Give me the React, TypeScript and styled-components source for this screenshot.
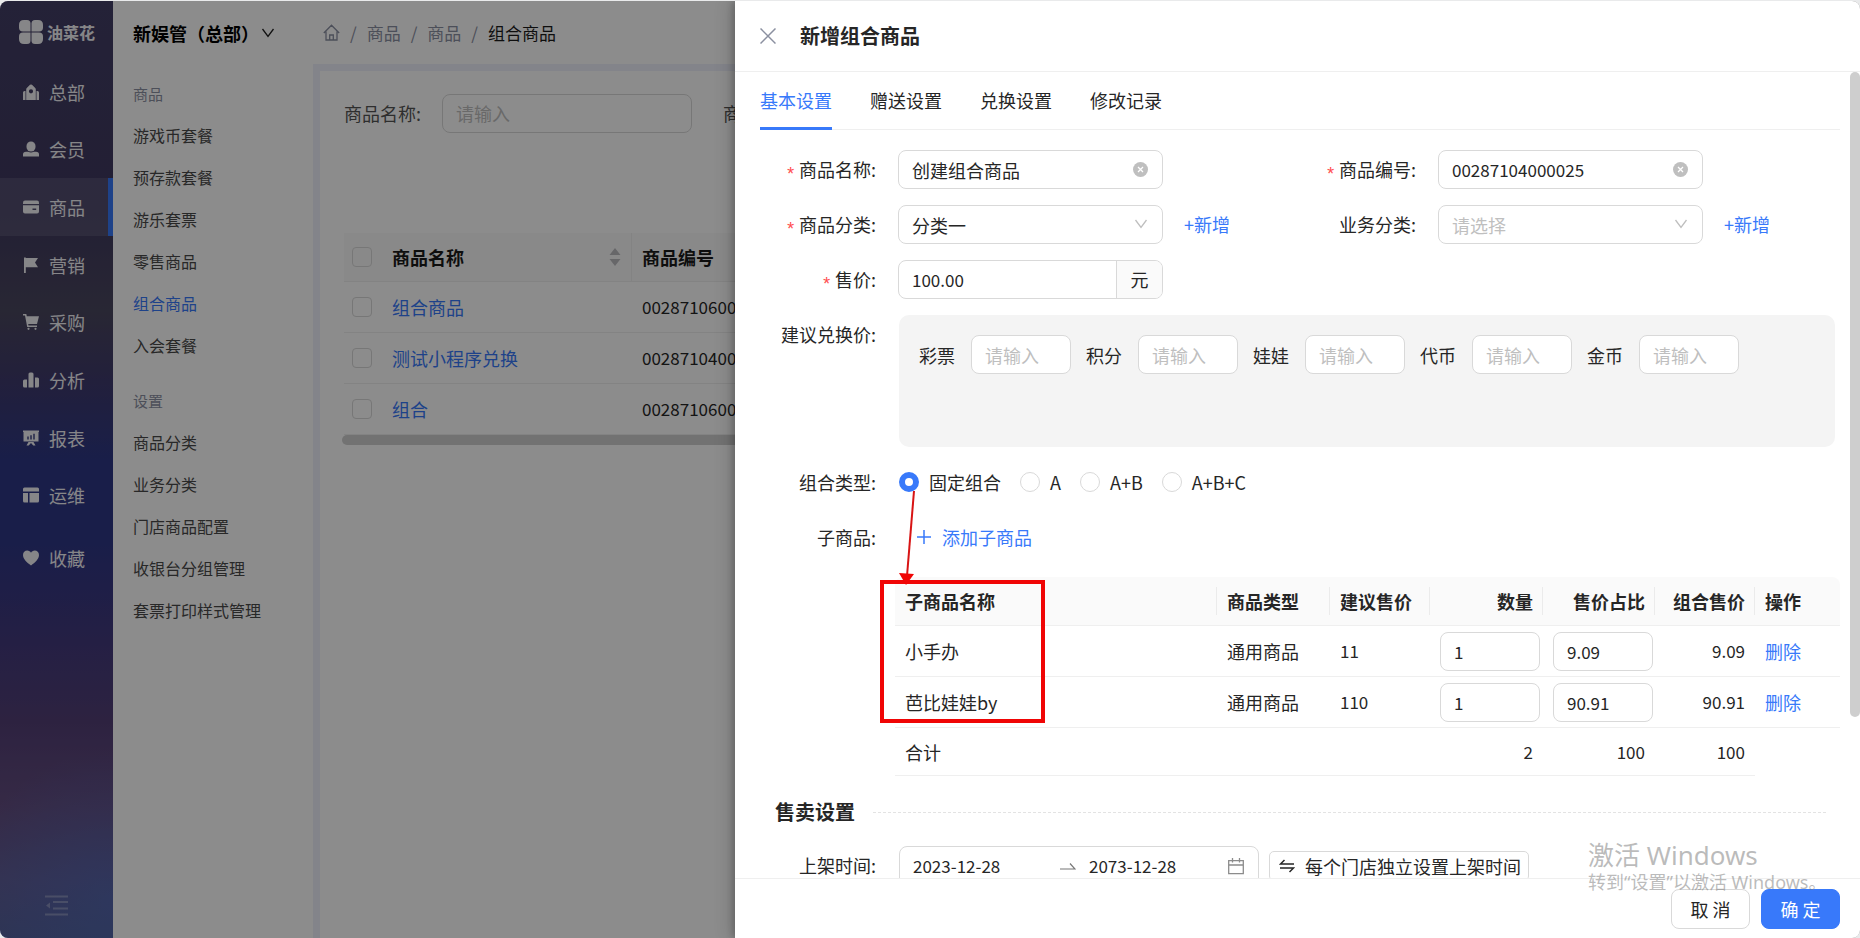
import React from 'react';
import styled, { createGlobalStyle, css } from 'styled-components';

const PRIMARY = '#3879fa';
const TEXT = '#262626';
const LINE = '#d9d9d9';
const SOFT_LINE = '#efefef';

const GlobalStyle = createGlobalStyle`
  *, *::before, *::after { box-sizing: border-box; }
  body {
    margin: 0;
    background: #e9eaeb;
    color: ${TEXT};
    font-family: "Noto Sans CJK SC", "Noto Sans", sans-serif;
    font-size: 18px;
    line-height: 24px;
  }
  button, input, select { font: inherit; color: inherit; margin: 0; }
  button { background: none; border: 0; padding: 0; cursor: pointer; }
  a { color: inherit; text-decoration: none; }
  ul { list-style: none; margin: 0; padding: 0; }
  h1, h2, p { margin: 0; }
  svg { display: block; flex: none; }
`;

/* ---------- shell ---------- */

const Frame = styled.div`
  height: 100vh;
  padding-top: 1px;
`;

const Shell = styled.div`
  position: relative;
  display: flex;
  height: 100%;
  overflow: hidden;
  border-radius: 8px;
  background: #fff;
`;

const Rail = styled.nav`
  flex: none;
  width: 113px;
  display: flex;
  flex-direction: column;
  color: #f4f4f8;
  background:
    radial-gradient(circle at 100% 96%, rgba(76, 108, 190, 0.5), rgba(76, 108, 190, 0) 150px),
    linear-gradient(
      180deg,
      #433e66 0%,
      #3f3960 22%,
      #4a475f 33%,
      #403b6c 40%,
      #2e3885 49%,
      #2f3785 58%,
      #40397e 67%,
      #533f76 77%,
      #634d80 86%,
      #605c94 94%,
      #556098 100%
    );
`;

const Logo = styled.a`
  display: flex;
  align-items: center;
  gap: 4px;
  height: 62px;
  padding-left: 19px;
  font-size: 16px;
  font-weight: 700;
`;

const RailList = styled.ul`
  display: flex;
  flex-direction: column;
  height: 461px;
`;

const RailItem = styled.li<{ $active?: boolean }>`
  flex: 1;
  display: flex;
  ${(p) =>
    p.$active &&
    css`
      background: rgba(255, 255, 255, 0.1);
      border-right: 5px solid ${PRIMARY};
    `}
`;

const RailLink = styled.a`
  display: flex;
  align-items: center;
  gap: 10px;
  padding-left: 23px;
`;

const Favorite = styled(RailLink)`
  height: 68px;
`;

const Collapse = styled.button`
  margin: auto auto 22px 45px;
  opacity: 0.3;
`;

const Main = styled.div`
  flex: 1;
  min-width: 0;
  display: flex;
  flex-direction: column;
`;

const TopBar = styled.header`
  flex: none;
  display: flex;
  align-items: center;
  height: 63px;
  padding: 0 20px;
`;

const Org = styled.button`
  display: flex;
  align-items: center;
  gap: 2px;
  width: 190px;
  font-weight: 700;
  color: #000;
  white-space: nowrap;
`;

const Crumbs = styled.nav`
  display: flex;
  align-items: center;
  gap: 10px;
  font-size: 17px;
  color: #8b90a3;
`;

const CrumbHere = styled.span`
  color: #1a1a1a;
`;

const Columns = styled.div`
  flex: 1;
  display: flex;
  min-height: 0;
`;

const SubMenu = styled.nav`
  flex: none;
  width: 200px;
  padding: 20px 0 0 20px;
  font-size: 16px;
  color: #4a4a4a;
`;

const SubTitle = styled.h2`
  font-size: 15px;
  font-weight: 400;
  line-height: 20px;
  color: #8b90a3;
  padding-bottom: 10px;
  ul + & {
    padding-top: 25px;
  }
`;

const SubItem = styled.li<{ $active?: boolean }>`
  line-height: 42px;
  color: ${(p) => (p.$active ? PRIMARY : 'inherit')};
`;

const Content = styled.main`
  flex: 1;
  min-width: 0;
  overflow: hidden;
  border: solid #eff0fb;
  border-width: 7px 0 0 7px;
  padding: 22px 0 0 24px;
`;

const SearchRow = styled.div`
  display: flex;
  align-items: center;
  gap: 21px;
  height: 40px;
  margin-bottom: 100px;
  color: #555;
`;

const SearchLabel = styled.label`
  white-space: nowrap;
  input + & {
    margin-left: 10px;
  }
`;

/* ---------- shared controls ---------- */

const Input = styled.input<{ $w?: number; $num?: boolean }>`
  width: ${(p) => (p.$w ? `${p.$w}px` : '100%')};
  height: 39px;
  padding: 0 13px;
  border: 1px solid ${LINE};
  border-radius: 8px;
  background: #fff;
  font-size: ${(p) => (p.$num ? 17 : 18)}px;
  outline: 0;
  &::placeholder {
    color: #bfbfbf;
    opacity: 1;
  }
`;

const Check = styled.input.attrs({ type: 'checkbox' })`
  appearance: none;
  display: block;
  width: 20px;
  height: 20px;
  border: 1px solid ${LINE};
  border-radius: 4px;
`;

const Link = styled.a`
  color: ${PRIMARY};
`;

/* ---------- product list ---------- */

const ListTable = styled.table`
  width: 100%;
  min-width: 1500px;
  table-layout: fixed;
  border-collapse: separate;
  border-spacing: 0;
  th,
  td {
    height: 51px;
    padding: 0 10px;
    text-align: left;
    border-bottom: 1px solid ${SOFT_LINE};
  }
  th {
    height: 49px;
    background: #fafafa;
    color: #1a1a1a;
  }
  th:first-child,
  td:first-child {
    width: 38px;
    padding: 0 0 0 8px;
  }
  th:nth-child(2) {
    width: 250px;
    border-right: 1px solid ${SOFT_LINE};
  }
  td:nth-child(3) {
    font-size: 17px;
  }
`;

const SortHead = styled.span`
  display: flex;
  align-items: center;
  justify-content: space-between;
`;

const HScroll = styled.div`
  height: 10px;
  margin-left: -2px;
  border-radius: 5px;
  background: #d0d0d0;
`;

/* ---------- drawer ---------- */

const Mask = styled.div`
  position: absolute;
  inset: 0;
  background: rgba(0, 0, 0, 0.45);
`;

const Drawer = styled.aside`
  position: absolute;
  top: 0;
  right: 0;
  bottom: 0;
  width: 1125px;
  max-width: 100%;
  display: flex;
  flex-direction: column;
  background: #fff;
  box-shadow: -6px 0 16px rgba(0, 0, 0, 0.12), -3px 0 6px rgba(0, 0, 0, 0.18);
`;

const DrawerHead = styled.header`
  flex: none;
  display: flex;
  align-items: center;
  gap: 24px;
  height: 71px;
  padding-left: 25px;
  border-bottom: 1px solid ${SOFT_LINE};
`;

const DrawerTitle = styled.h1`
  font-size: 20px;
  line-height: 28px;
  font-weight: 700;
`;

const ScrollArea = styled.div`
  position: relative;
  flex: 1;
  min-height: 0;
`;

const DrawerBody = styled.div`
  height: 100%;
  overflow-y: auto;
  scrollbar-width: none;
  padding: 0 20px 20px 25px;
`;

const Thumb = styled.div`
  position: absolute;
  top: 0;
  right: 0;
  width: 10px;
  height: 80%;
  border-radius: 5px;
  background: #cecece;
`;

const Tabs = styled.div`
  display: flex;
  gap: 38px;
  height: 58px;
  border-bottom: 1px solid ${SOFT_LINE};
`;

const Tab = styled.button<{ $active?: boolean }>`
  height: 58px;
  border-bottom: 3px solid ${(p) => (p.$active ? PRIMARY : 'transparent')};
  color: ${(p) => (p.$active ? PRIMARY : 'inherit')};
`;

const Form = styled.form`
  display: grid;
  grid-template-columns: 1fr 1fr;
  row-gap: 16px;
  padding-top: 20px;
`;

const Field = styled.div<{ $wide?: boolean }>`
  display: flex;
  align-items: flex-start;
  grid-column: ${(p) => (p.$wide ? '1 / -1' : 'auto')};
`;

const labelStyle = css`
  flex: none;
  width: 138px;
  padding-right: 22px;
  line-height: 39px;
  text-align: right;
  white-space: nowrap;
`;

const FieldLabel = styled.label<{ $required?: boolean }>`
  ${labelStyle}
  &::before {
    content: ${(p) => (p.$required ? '"*"' : 'none')};
    margin-right: 3px;
    color: #ff4d4f;
    font-family: "Liberation Mono", monospace;
    line-height: 20px;
    vertical-align: -3px;
  }
  &::after {
    content: ':';
  }
`;

const GroupLabel = styled.span`
  ${labelStyle}
  &::after {
    content: ':';
  }
`;

const Control = styled.div`
  position: relative;
  width: 265px;
`;

const Suffix = styled.span`
  position: absolute;
  top: 12px;
  right: 15px;
  pointer-events: none;
`;

const Select = styled.select<{ $empty?: boolean }>`
  appearance: none;
  width: 100%;
  height: 39px;
  padding: 0 36px 0 13px;
  border: 1px solid ${LINE};
  border-radius: 8px;
  background: #fff;
  color: ${(p) => (p.$empty ? '#bfbfbf' : 'inherit')};
`;

const AddLink = styled(Link)`
  margin-left: 21px;
  line-height: 39px;
`;

const PriceGroup = styled.div`
  display: flex;
  width: 265px;
  height: 39px;
  border: 1px solid ${LINE};
  border-radius: 8px;
  overflow: hidden;
`;

const BareInput = styled.input`
  flex: 1;
  min-width: 0;
  border: 0;
  padding: 0 13px;
  background: none;
  font-size: 17px;
  outline: 0;
`;

const Addon = styled.span`
  width: 46px;
  border-left: 1px solid ${LINE};
  background: #fafafa;
  line-height: 37px;
  text-align: center;
`;

const Panel = styled.div`
  flex: 1;
  display: flex;
  align-items: flex-start;
  gap: 15px;
  height: 132px;
  margin: 0 5px 0 1px;
  padding: 20px;
  border-radius: 10px;
  background: #f4f4f4;
`;

const PanelField = styled.label`
  display: flex;
  align-items: center;
  gap: 16px;
  white-space: nowrap;
`;

const Radios = styled.div`
  display: flex;
  align-items: center;
  gap: 19px;
  height: 38px;
  padding-left: 1px;
`;

const RadioLabel = styled.label`
  display: flex;
  align-items: center;
  gap: 10px;
`;

const Radio = styled.input.attrs({ type: 'radio' })`
  appearance: none;
  width: 20px;
  height: 20px;
  border: 1px solid ${LINE};
  border-radius: 50%;
  background: #fff;
  &:checked {
    border: 6px solid ${PRIMARY};
  }
`;

const AddChild = styled.button`
  display: flex;
  align-items: center;
  gap: 11px;
  height: 38px;
  margin-left: 19px;
  color: ${PRIMARY};
`;

const ChildBlock = styled.div`
  position: relative;
  margin: 20px 0 0 135px;
`;

const ChildTable = styled.table`
  width: 100%;
  table-layout: fixed;
  border-collapse: separate;
  border-spacing: 0;
  th,
  td {
    height: 51px;
    padding: 0 10px;
    text-align: left;
    border-bottom: 1px solid ${SOFT_LINE};
    white-space: nowrap;
  }
  th {
    height: 49px;
    background: #fafafa;
  }
  th:first-child {
    border-top-left-radius: 8px;
  }
  th:last-child {
    border-top-right-radius: 8px;
  }
  tfoot td {
    height: 48px;
  }
  tfoot td:last-child {
    border-bottom: 0;
  }
`;

const HeadCell = styled.th<{ $w?: number; $end?: boolean }>`
  width: ${(p) => (p.$w ? `${p.$w}px` : 'auto')};
  && {
    text-align: ${(p) => (p.$end ? 'right' : 'left')};
  }
  &:not(:last-child) {
    background: linear-gradient(#ebebeb, #ebebeb) right center / 1px 28px no-repeat, #fafafa;
  }
`;

const NumCell = styled.td<{ $end?: boolean }>`
  font-size: 17px;
  && {
    text-align: ${(p) => (p.$end ? 'right' : 'left')};
  }
`;

const InputCell = styled.td`
  && {
    padding: 0 0 0 10px;
  }
`;

const Highlight = styled.div`
  position: absolute;
  top: 3px;
  left: -15px;
  width: 165px;
  height: 143px;
  border: 4px solid #f00505;
  pointer-events: none;
`;

const Pointer = styled.svg`
  position: absolute;
  top: -87px;
  left: 3px;
  pointer-events: none;
`;

const SectionHead = styled.div`
  display: flex;
  align-items: center;
  gap: 18px;
  margin: 22px 14px 20px 15px;
  &::after {
    content: '';
    flex: 1;
    border-top: 1px dashed #e3e3e3;
  }
`;

const SectionTitle = styled.h2`
  font-size: 20px;
  line-height: 28px;
`;

const DateRange = styled.div`
  display: flex;
  align-items: center;
  width: 360px;
  height: 40px;
  margin: 0 10px 0 1px;
  padding-right: 14px;
  border: 1px solid ${LINE};
  border-radius: 8px;
`;

const StartInput = styled(BareInput)`
  flex: none;
  width: 160px;
`;

const PlainButton = styled.button`
  display: flex;
  align-items: center;
  gap: 10px;
  height: 30px;
  margin-top: 5px;
  padding: 0 7px 0 9px;
  border: 1px solid ${LINE};
  border-radius: 5px;
  white-space: nowrap;
`;

const DrawerFoot = styled.footer`
  flex: none;
  display: flex;
  justify-content: flex-end;
  gap: 11px;
  height: 60px;
  padding: 10px 20px 0;
  border-top: 1px solid ${SOFT_LINE};
`;

const FootButton = styled.button<{ $primary?: boolean }>`
  width: 79px;
  height: 40px;
  border-radius: 8px;
  border: 1px solid ${(p) => (p.$primary ? PRIMARY : LINE)};
  background: ${(p) => (p.$primary ? PRIMARY : '#fff')};
  color: ${(p) => (p.$primary ? '#fff' : 'inherit')};
`;

const Activation = styled.div`
  position: absolute;
  right: 36px;
  bottom: 44px;
  width: 236px;
  color: rgba(120, 120, 120, 0.5);
  font-family: "Noto Sans", "Noto Sans CJK SC", sans-serif;
  white-space: nowrap;
  pointer-events: none;
`;

const ActivationTitle = styled.p`
  font-size: 26px;
  line-height: 30px;
`;

/* ---------- icons ---------- */

const Glyph = ({ children }: { children: React.ReactNode }) => (
  <svg width="16" height="16" viewBox="0 0 16 16" fill="currentColor" aria-hidden="true">
    {children}
  </svg>
);

const HouseGlyph = () => (
  <Glyph>
    <path d="M0 8.500Q0 7 1.500 7h1v9H0zM16 8.500Q16 7 14.500 7h-1v9H16z" />
    <path fillRule="evenodd" d="M3.200 5.500Q3.200 4.500 4 3.800L7 .8q1-.8 2 0l3 3q.8.7.8 1.700V16H3.200zM8 5.200a2.100 2.100 0 1 0 0 4.200 2.100 2.100 0 0 0 0-4.200z" />
  </Glyph>
);
const UserGlyph = () => (
  <Glyph>
    <rect x="3.500" y="0.500" width="9" height="10" rx="4.500" />
    <path d="M0 15.500v-2Q0 10.800 3 10.800h2.200q2.800 1.400 5.600 0H13q3 0 3 2.700v2z" />
  </Glyph>
);
const CardGlyph = () => (
  <Glyph>
    <path d="M2 1.500h12q2 0 2 2V5H0V3.500q0-2 2-2z" />
    <path fillRule="evenodd" d="M0 6.300h16v6.200q0 2-2 2H2q-2 0-2-2zM9.500 9.500V11h3.700V9.500z" />
  </Glyph>
);
const FlagGlyph = () => (
  <Glyph>
    <path d="M1 .5h1.800V1H15l-3 4.500 3 4.700H2.800V16H1z" />
  </Glyph>
);
const CartGlyph = () => (
  <Glyph>
    <path d="M0 0h3.300l.5 2.200H16l-2 7.800H5.200l.3 1.500H14V13H4.200L2 1.500H0z" />
    <circle cx="5.500" cy="14.800" r="1.100" />
    <circle cx="12.500" cy="14.800" r="1.100" />
  </Glyph>
);
const BarsGlyph = () => (
  <Glyph>
    <path d="M0 9q0-1.500 1.500-1.500H4V15.500H1.500Q0 15.500 0 14zM5.500 2Q5.500.5 7 .5h2q1.500 0 1.500 1.500v13.500h-5zM12 5.500h2.500Q16 5.500 16 7v7q0 1.500-1.500 1.500H12z" />
  </Glyph>
);
const BoardGlyph = () => (
  <Glyph>
    <path fillRule="evenodd" d="M0 .5h16V2h-.5v9.500h-15V2H0zM4.300 6.500v3h1.400v-3zM7.300 5.200v4.300h1.400V5.200zM10.300 3.700v5.800h1.400V3.700z" />
    <path d="M5.500 12h5l2 3.500h-2.200L8 13l-2.300 2.500H3.500z" />
  </Glyph>
);
const LayoutGlyph = () => (
  <Glyph>
    <path d="M1.500.5h13Q16 .5 16 2v2.500H0V2Q0 .5 1.500.5zM0 6h5v9.500H1.500Q0 15.500 0 14zM6.500 6H16v8q0 1.500-1.500 1.500h-8z" />
  </Glyph>
);
const HeartGlyph = () => (
  <Glyph>
    <path d="M8 15.500C4 12.500 0 9 0 5 0 2 2 .5 4.200.5 6 .5 7.300 1.500 8 2.700 8.700 1.500 10 .5 11.800.5 14 .5 16 2 16 5c0 4-4 7.500-8 10.500z" />
  </Glyph>
);

const LogoMark = () => (
  <svg width="24" height="24" viewBox="0 0 24 24" fill="currentColor" aria-hidden="true">
    <path d="M5 0h3q3.500 0 3.500 3.500v8H4Q0 11.500 0 7.500V5Q0 0 5 0z" />
    <path d="M16 0h3q5 0 5 5v2.500q0 4-4 4h-7.500v-8Q12.500 0 16 0z" />
    <path d="M4 12.500h7.500v8Q11.500 24 8 24H5q-5 0-5-5v-2.500q0-4 4-4z" />
    <path d="M12.500 12.500H20q4 0 4 4V19q0 5-5 5h-3q-3.500 0-3.500-3.500z" />
  </svg>
);

const Chevron = ({ color }: { color: string }) => (
  <svg width="14" height="14" viewBox="0 0 14 14" fill="none" stroke={color} strokeWidth="1.300" aria-hidden="true">
    <path d="M1.500 3 7 10.500 12.500 3" />
  </svg>
);

const ClearIcon = () => (
  <svg width="15" height="15" viewBox="0 0 15 15" aria-hidden="true">
    <circle cx="7.500" cy="7.500" r="7.500" fill="#bfbfbf" />
    <path d="M5 5l5 5M10 5l-5 5" stroke="#fff" strokeWidth="1.300" />
  </svg>
);

const HomeIcon = () => (
  <svg width="17" height="17" viewBox="0 0 17 17" fill="none" stroke="currentColor" strokeWidth="1.300" aria-hidden="true">
    <path d="M.8 9 8.500 1.200 16.200 9M3 7.500V16h11V7.500M6.700 16v-5h3.600v5" />
  </svg>
);

/* ---------- data ---------- */

const railItems = [
  { name: '总部', icon: <HouseGlyph /> },
  { name: '会员', icon: <UserGlyph /> },
  { name: '商品', icon: <CardGlyph /> },
  { name: '营销', icon: <FlagGlyph /> },
  { name: '采购', icon: <CartGlyph /> },
  { name: '分析', icon: <BarsGlyph /> },
  { name: '报表', icon: <BoardGlyph /> },
  { name: '运维', icon: <LayoutGlyph /> },
];
const goodsMenu = ['游戏币套餐', '预存款套餐', '游乐套票', '零售商品', '组合商品', '入会套餐'];
const settingMenu = ['商品分类', '业务分类', '门店商品配置', '收银台分组管理', '套票打印样式管理'];
const products = [
  { name: '组合商品', code: '00287106000' },
  { name: '测试小程序兑换', code: '00287104000' },
  { name: '组合', code: '00287106000' },
];
const currencies = ['彩票', '积分', '娃娃', '代币', '金币'];
const comboTypes = ['固定组合', 'A', 'A+B', 'A+B+C'];
const children = [
  { name: '小手办', type: '通用商品', price: '11', qty: '1', ratio: '9.09', total: '9.09' },
  { name: '芭比娃娃by', type: '通用商品', price: '110', qty: '1', ratio: '90.91', total: '90.91' },
];

/* ---------- page ---------- */

export default function App() {
  return (
    <Frame>
      <GlobalStyle />
      <Shell>
        <Rail aria-label="主导航">
          <Logo href="#">
            <LogoMark />
            油菜花
          </Logo>
          <RailList>
            {railItems.map((item) => (
              <RailItem key={item.name} $active={item.name === '商品'}>
                <RailLink href="#">
                  {item.icon}
                  {item.name}
                </RailLink>
              </RailItem>
            ))}
          </RailList>
          <Favorite href="#">
            <HeartGlyph />
            收藏
          </Favorite>
          <Collapse type="button" aria-label="收起菜单">
            <svg width="23" height="21" viewBox="0 0 23 21" fill="none" stroke="currentColor" strokeWidth="2">
              <path d="M0 1.500h23M8 7h15M8 13.500h15M0 19.500h23" />
              <path d="M5 7.500v6L1 10.500z" fill="currentColor" stroke="none" />
            </svg>
          </Collapse>
        </Rail>

        <Main>
          <TopBar>
            <Org type="button">
              新娱管（总部）
              <Chevron color="#222" />
            </Org>
            <Crumbs aria-label="面包屑">
              <a href="#" aria-label="首页">
                <HomeIcon />
              </a>
              <span>/</span>
              <a href="#">商品</a>
              <span>/</span>
              <a href="#">商品</a>
              <span>/</span>
              <CrumbHere>组合商品</CrumbHere>
            </Crumbs>
          </TopBar>
          <Columns>
            <SubMenu aria-label="商品菜单">
              <SubTitle>商品</SubTitle>
              <ul>
                {goodsMenu.map((name) => (
                  <SubItem key={name} $active={name === '组合商品'}>
                    <a href="#">{name}</a>
                  </SubItem>
                ))}
              </ul>
              <SubTitle>设置</SubTitle>
              <ul>
                {settingMenu.map((name) => (
                  <SubItem key={name}>
                    <a href="#">{name}</a>
                  </SubItem>
                ))}
              </ul>
            </SubMenu>
            <Content>
              <SearchRow>
                <SearchLabel htmlFor="search-name">商品名称:</SearchLabel>
                <Input id="search-name" $w={250} placeholder="请输入" />
                <SearchLabel htmlFor="search-code">商品编号:</SearchLabel>
                <Input id="search-code" $w={250} placeholder="请输入" />
              </SearchRow>
              <ListTable>
                <thead>
                  <tr>
                    <th>
                      <Check aria-label="全选" />
                    </th>
                    <th>
                      <SortHead>
                        商品名称
                        <svg width="12" height="18" viewBox="0 0 12 18" fill="#bcbcc0" aria-hidden="true">
                          <path d="M6 0l5.500 7H.5zM6 18l5.500-7H.5z" />
                        </svg>
                      </SortHead>
                    </th>
                    <th>商品编号</th>
                  </tr>
                </thead>
                <tbody>
                  {products.map((p) => (
                    <tr key={p.name}>
                      <td>
                        <Check aria-label={p.name} />
                      </td>
                      <td>
                        <Link href="#">{p.name}</Link>
                      </td>
                      <td>{p.code}</td>
                    </tr>
                  ))}
                </tbody>
              </ListTable>
              <HScroll />
            </Content>
          </Columns>
        </Main>

        <Mask />

        <Drawer role="dialog" aria-labelledby="drawer-title">
          <DrawerHead>
            <button type="button" aria-label="关闭">
              <svg width="16" height="16" viewBox="0 0 16 16" stroke="#8b90a0" strokeWidth="1.500">
                <path d="M.5.5l15 15M15.500.5l-15 15" />
              </svg>
            </button>
            <DrawerTitle id="drawer-title">新增组合商品</DrawerTitle>
          </DrawerHead>

          <ScrollArea>
            <DrawerBody>
              <Tabs role="tablist">
                {['基本设置', '赠送设置', '兑换设置', '修改记录'].map((name, i) => (
                  <Tab key={name} type="button" role="tab" aria-selected={i === 0} $active={i === 0}>
                    {name}
                  </Tab>
                ))}
              </Tabs>

              <Form>
                <Field>
                  <FieldLabel htmlFor="name" $required>
                    商品名称
                  </FieldLabel>
                  <Control>
                    <Input id="name" defaultValue="创建组合商品" />
                    <Suffix>
                      <ClearIcon />
                    </Suffix>
                  </Control>
                </Field>
                <Field>
                  <FieldLabel htmlFor="code" $required>
                    商品编号
                  </FieldLabel>
                  <Control>
                    <Input id="code" $num defaultValue="00287104000025" />
                    <Suffix>
                      <ClearIcon />
                    </Suffix>
                  </Control>
                </Field>

                <Field>
                  <FieldLabel htmlFor="category" $required>
                    商品分类
                  </FieldLabel>
                  <Control>
                    <Select id="category">
                      <option>分类一</option>
                    </Select>
                    <Suffix>
                      <Chevron color="#bfbfbf" />
                    </Suffix>
                  </Control>
                  <AddLink href="#">+新增</AddLink>
                </Field>
                <Field>
                  <FieldLabel htmlFor="business">业务分类</FieldLabel>
                  <Control>
                    <Select id="business" $empty>
                      <option>请选择</option>
                    </Select>
                    <Suffix>
                      <Chevron color="#bfbfbf" />
                    </Suffix>
                  </Control>
                  <AddLink href="#">+新增</AddLink>
                </Field>

                <Field $wide>
                  <FieldLabel htmlFor="price" $required>
                    售价
                  </FieldLabel>
                  <PriceGroup>
                    <BareInput id="price" defaultValue="100.00" />
                    <Addon>元</Addon>
                  </PriceGroup>
                </Field>

                <Field $wide>
                  <GroupLabel>建议兑换价</GroupLabel>
                  <Panel>
                    {currencies.map((name) => (
                      <PanelField key={name}>
                        {name}
                        <Input $w={100} placeholder="请输入" />
                      </PanelField>
                    ))}
                  </Panel>
                </Field>

                <Field $wide role="radiogroup" aria-label="组合类型">
                  <GroupLabel>组合类型</GroupLabel>
                  <Radios>
                    {comboTypes.map((name, i) => (
                      <RadioLabel key={name}>
                        <Radio name="combo" defaultChecked={i === 0} />
                        {name}
                      </RadioLabel>
                    ))}
                  </Radios>
                </Field>

                <Field $wide>
                  <GroupLabel>子商品</GroupLabel>
                  <AddChild type="button">
                    <svg width="14" height="14" viewBox="0 0 14 14" stroke="currentColor" strokeWidth="1.500" aria-hidden="true">
                      <path d="M0 7h14M7 0v14" />
                    </svg>
                    添加子商品
                  </AddChild>
                </Field>
              </Form>

              <ChildBlock>
                <ChildTable>
                  <thead>
                    <tr>
                      <HeadCell>子商品名称</HeadCell>
                      <HeadCell $w={113}>商品类型</HeadCell>
                      <HeadCell $w={100}>建议售价</HeadCell>
                      <HeadCell $w={113} $end>
                        数量
                      </HeadCell>
                      <HeadCell $w={112} $end>
                        售价占比
                      </HeadCell>
                      <HeadCell $w={100} $end>
                        组合售价
                      </HeadCell>
                      <HeadCell $w={85}>操作</HeadCell>
                    </tr>
                  </thead>
                  <tbody>
                    {children.map((c) => (
                      <tr key={c.name}>
                        <td>{c.name}</td>
                        <td>{c.type}</td>
                        <NumCell>{c.price}</NumCell>
                        <InputCell>
                          <Input $w={100} $num aria-label={`${c.name} 数量`} defaultValue={c.qty} />
                        </InputCell>
                        <InputCell>
                          <Input $w={100} $num aria-label={`${c.name} 售价占比`} defaultValue={c.ratio} />
                        </InputCell>
                        <NumCell $end>{c.total}</NumCell>
                        <td>
                          <Link href="#">删除</Link>
                        </td>
                      </tr>
                    ))}
                  </tbody>
                  <tfoot>
                    <tr>
                      <td colSpan={3}>合计</td>
                      <NumCell $end>2</NumCell>
                      <NumCell $end>100</NumCell>
                      <NumCell $end>100</NumCell>
                      <td />
                    </tr>
                  </tfoot>
                </ChildTable>
                <Highlight />
                <Pointer width="18" height="96" viewBox="0 0 18 96" aria-hidden="true">
                  <path d="M16 1 9 86" stroke="#d81414" strokeWidth="2" />
                  <path d="M1 83l15 1-8 11z" fill="#f00505" />
                </Pointer>
              </ChildBlock>

              <SectionHead>
                <SectionTitle>售卖设置</SectionTitle>
              </SectionHead>

              <Field>
                <FieldLabel htmlFor="start">上架时间</FieldLabel>
                <DateRange>
                  <StartInput id="start" defaultValue="2023-12-28" />
                  <svg width="16" height="8" viewBox="0 0 16 8" fill="none" stroke="#777" strokeWidth="1.200" aria-hidden="true">
                    <path d="M0 7h15L10 1.500" />
                  </svg>
                  <BareInput aria-label="下架时间" defaultValue="2073-12-28" />
                  <svg width="16" height="17" viewBox="0 0 16 17" fill="none" stroke="#8c8c8c" strokeWidth="1.300" aria-hidden="true">
                    <path d="M.7 2.700h14.600v13H.7zM.7 7h14.600M4.500 0v4.500M11.500 0v4.500" />
                  </svg>
                </DateRange>
                <PlainButton type="button">
                  <svg width="16" height="14" viewBox="0 0 16 14" fill="none" stroke="currentColor" strokeWidth="1.500" aria-hidden="true">
                    <path d="M5.500 1 1.500 5H15M1 9h13.500l-4 4" />
                  </svg>
                  每个门店独立设置上架时间
                </PlainButton>
              </Field>
            </DrawerBody>
            <Thumb />
          </ScrollArea>

          <DrawerFoot>
            <FootButton type="button">取 消</FootButton>
            <FootButton type="button" $primary>
              确 定
            </FootButton>
          </DrawerFoot>
        </Drawer>

        <Activation>
          <ActivationTitle>激活 Windows</ActivationTitle>
          <p>转到“设置”以激活 Windows。</p>
        </Activation>
      </Shell>
    </Frame>
  );
}
